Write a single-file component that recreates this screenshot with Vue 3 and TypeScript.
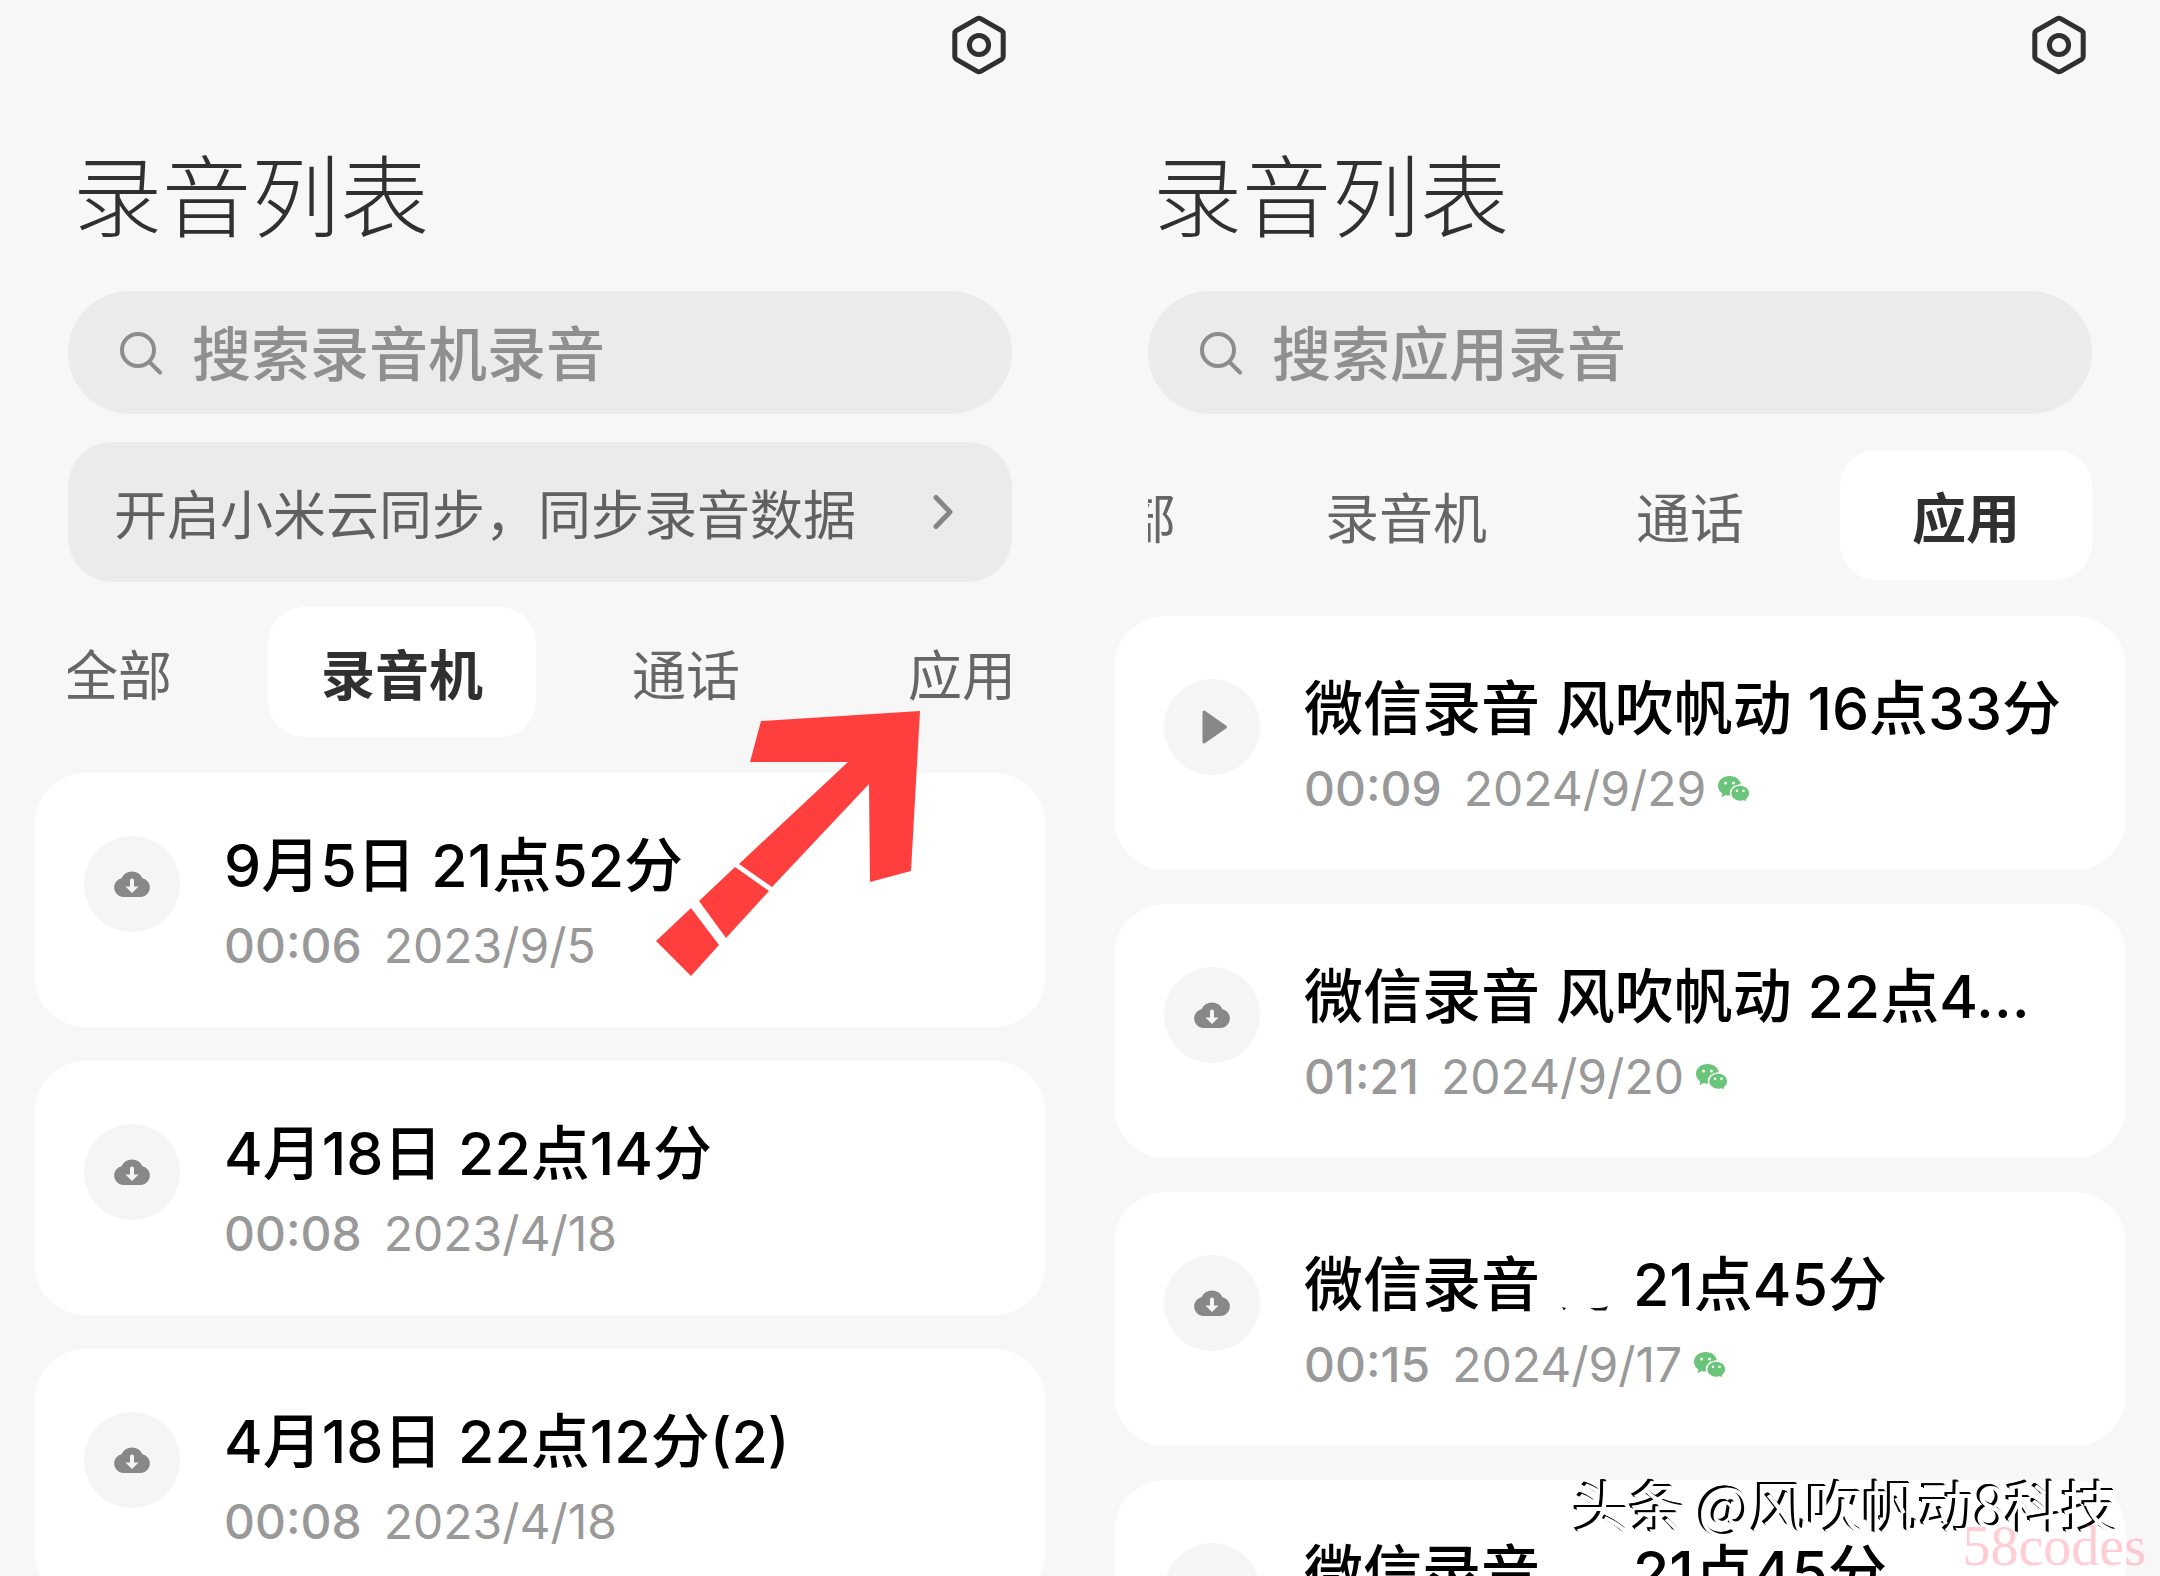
<script setup lang="ts">
interface Recording {
  title: string
  tail?: string
  duration: string
  date: string
  icon: 'cloud' | 'play'
  masked?: boolean
}

interface Pane {
  id: string
  placeholder: string
  sync: boolean
  wechat: boolean
  active: string
  recordings: Recording[]
}

const tabs: string[] = ['全部', '录音机', '通话', '应用']

const panes: Pane[] = [
  {
    id: 'recorder',
    placeholder: '搜索录音机录音',
    sync: true,
    wechat: false,
    active: '录音机',
    recordings: [
      { title: '9月5日 21点52分', duration: '00:06', date: '2023/9/5', icon: 'cloud' },
      { title: '4月18日 22点14分', duration: '00:08', date: '2023/4/18', icon: 'cloud' },
      { title: '4月18日 22点12分(2)', duration: '00:08', date: '2023/4/18', icon: 'cloud' },
    ],
  },
  {
    id: 'apps',
    placeholder: '搜索应用录音',
    sync: false,
    wechat: true,
    active: '应用',
    recordings: [
      { title: '微信录音 风吹帆动 16点33分', duration: '00:09', date: '2024/9/29', icon: 'play' },
      { title: '微信录音 风吹帆动 22点4…', duration: '01:21', date: '2024/9/20', icon: 'cloud' },
      { title: '微信录音', tail: '21点45分', duration: '00:15', date: '2024/9/17', icon: 'cloud', masked: true },
      { title: '微信录音', tail: '21点45分', duration: '00:15', date: '2024/9/17', icon: 'cloud', masked: true },
    ],
  },
]
</script>

<template>
  <main class="screens">
    <section v-for="pane in panes" :key="pane.id" class="pane">
      <div class="toolbar">
        <button class="settings" type="button" aria-label="设置">
          <svg width="56" height="60" viewBox="0 0 56 60" fill="none" stroke="#303030" stroke-width="5">
            <path d="M26.3 3.6Q28 2.7 29.7 3.6L50.6 15.6Q52.2 16.6 52.2 18.5V41.5Q52.2 43.4 50.6 44.4L29.7 56.4Q28 57.3 26.3 56.4L5.4 44.4Q3.8 43.4 3.8 41.5V18.5Q3.8 16.6 5.4 15.6Z" />
            <circle cx="28" cy="30" r="9.6" />
          </svg>
        </button>
      </div>

      <h1 class="heading">录音列表</h1>

      <label class="search">
        <svg width="44" height="44" viewBox="0 0 44 44" fill="none" stroke="#8c8c8c" stroke-width="4" stroke-linecap="round">
          <circle cx="18" cy="19" r="16" />
          <path d="M29.5 31L40 41.5" />
        </svg>
        <input type="text" :placeholder="pane.placeholder" :aria-label="pane.placeholder" />
      </label>

      <button v-if="pane.sync" class="sync" type="button">
        <span>开启小米云同步，同步录音数据</span>
        <svg width="22" height="36" viewBox="0 0 22 36" fill="none" stroke="#868686" stroke-width="5" stroke-linecap="round" stroke-linejoin="round">
          <path d="M4 3.500L18 18L4 32.500" />
        </svg>
      </button>

      <nav class="tabs" :class="{ 'tabs-middle': pane.sync }">
        <button
          v-for="tab in tabs"
          :key="tab"
          type="button"
          class="tab"
          :class="{ active: tab === pane.active }"
        >
          {{ tab }}
        </button>
      </nav>

      <ul class="list">
        <li v-for="(rec, i) in pane.recordings" :key="i" class="card">
          <button class="action" type="button" :aria-label="rec.icon === 'play' ? '播放' : '下载'">
            <svg v-if="rec.icon === 'play'" class="play" width="26" height="36" viewBox="0 0 26 36">
              <path d="M2 3L23.500 18L2 33Z" fill="#888" stroke="#888" stroke-width="3" stroke-linejoin="round" />
            </svg>
            <svg v-else width="38" height="28" viewBox="0 0 38 28">
              <path d="M9.500 27A9.500 9.500 0 0 1 8.500 8.300A11.500 11.500 0 0 1 29.500 8.300A9.500 9.500 0 0 1 28.500 27Z" fill="#888" />
              <path d="M17 10.500Q17 8.500 19 8.500T21 10.500V16.500H25.500L19 23L12.500 16.500H17Z" fill="#f5f5f5" />
            </svg>
          </button>
          <div class="info">
            <h2 class="title">
              <span>{{ rec.title }}</span>
              <svg v-if="rec.masked" class="mask" width="93" height="60" viewBox="0 0 93 60">
                <path d="M22 52l4 1-2 2.500zM50 53h9q5 0 9-2l-2 4.500h-11z" fill="#111" />
              </svg>
              <span v-if="rec.tail">{{ rec.tail }}</span>
            </h2>
            <p class="meta">
              <span class="duration">{{ rec.duration }}</span>
              <span class="date">{{ rec.date }}</span>
              <svg v-if="pane.wechat" class="wechat" width="32" height="28" viewBox="0 0 32 28">
                <path d="M11.500 1C5.200 1 0 5.200 0 10.800C0 14 1.700 16.800 4.300 18.600L3.600 22.300L7.700 19.900Q9.500 20.500 12 20.500C18 20.500 23 16.500 23 10.800S18 1 11.500 1Z" fill="#6ac47a" />
                <path d="M22.300 10C27.600 10 32 13.600 32 18.200C32 20.800 30.700 23 28.600 24.600L29.200 27.500L25.800 26Q24.200 26.500 22.300 26.500C16.800 26.500 12.500 22.800 12.500 18.200S16.800 10 22.300 10Z" fill="#6ac47a" stroke="#fff" stroke-width="1.500" />
                <circle cx="7.500" cy="8" r="1.500" fill="#fff" />
                <circle cx="15.500" cy="8" r="1.500" fill="#fff" />
                <circle cx="19" cy="15.800" r="1.300" fill="#fff" />
                <circle cx="25.500" cy="15.800" r="1.300" fill="#fff" />
              </svg>
            </p>
          </div>
        </li>
      </ul>

      <svg v-if="pane.sync" class="arrow" width="280" height="280" viewBox="650 705 280 280" fill="#ff3f3d">
        <path d="M761 721L920 711L911 871L870 882L869 784L772 887L739 864L848 762H750Z" />
        <path d="M735 867L769 891L726 938L699 901Z" />
        <path d="M691 908L719 945L691 976L656 941Z" />
      </svg>
    </section>

    <div class="credit">头条 @风吹帆动8科技</div>
    <div class="site">58codes</div>
  </main>
</template>

<style>
body {
  background: #f7f7f7;
}
</style>

<style scoped>
.screens {
  position: relative;
  display: flex;
  height: 100vh;
  overflow: hidden;
  background: #f7f7f7;
  font-family: Inter, "Noto Sans CJK SC", sans-serif;
}

.pane {
  position: relative;
  flex: 1;
  min-width: 0;
}

button {
  padding: 0;
  border: 0;
  background: none;
  font: inherit;
  color: inherit;
  cursor: pointer;
}

svg {
  display: block;
  flex: none;
}

.toolbar {
  display: flex;
  justify-content: flex-end;
  padding: 15px 73px 0;
}

.heading {
  margin: 73px 73px 43px;
  font-size: 89px;
  line-height: 100px;
  font-weight: 300;
  color: #303030;
}

.search {
  display: flex;
  align-items: center;
  gap: 28px;
  height: 123px;
  margin: 0 68px;
  padding: 0 52px;
  border-radius: 62px;
  background: #ebebeb;
}

.search input {
  flex: 1;
  min-width: 0;
  height: 90px;
  padding: 4px 0 0;
  box-sizing: border-box;
  border: 0;
  outline: 0;
  background: none;
  font-family: inherit;
  font-size: 59px;
  font-weight: 500;
  color: #303030;
}

.search input::placeholder {
  color: #8f8f8f;
  opacity: 1;
}

.sync {
  display: flex;
  align-items: center;
  justify-content: space-between;
  width: calc(100% - 136px);
  height: 140px;
  margin: 28px 68px 0;
  padding: 0 58px 0 46px;
  border-radius: 44px;
  background: #ebebeb;
  font-size: 53px;
  color: #606060;
}

.tabs {
  display: flex;
  justify-content: flex-end;
  gap: 24px;
  height: 130px;
  margin: 36px 68px 0;
  overflow: hidden;
}

.tabs-middle {
  justify-content: center;
  margin-top: 25px;
}

.tab {
  flex: none;
  min-width: 252px;
  padding: 0 53px;
  border-radius: 36px;
  font-size: 54px;
  color: #666;
}

.tab.active {
  background: #fff;
  font-weight: 700;
  color: #303030;
}

.list {
  display: flex;
  flex-direction: column;
  gap: 34px;
  margin: 36px 34px 0;
  padding: 0;
  list-style: none;
}

.card {
  display: flex;
  align-items: flex-start;
  gap: 44px;
  height: 254px;
  box-sizing: border-box;
  padding: 63px 50px 0;
  border-radius: 52px;
  background: #fff;
}

.action {
  display: flex;
  align-items: center;
  justify-content: center;
  flex: none;
  width: 96px;
  height: 96px;
  border-radius: 50%;
  background: #f5f5f5;
}

.play {
  margin-left: 6px;
}

.info {
  min-width: 0;
  white-space: nowrap;
}

.title {
  display: flex;
  margin: 0;
  font-size: 59px;
  line-height: 60px;
  font-weight: 500;
  color: #000;
}

.meta {
  display: flex;
  align-items: center;
  margin: 20px 0 0;
  font-size: 48px;
  line-height: 60px;
  color: #999;
}

.duration {
  margin-right: 22px;
  font-weight: 500;
}

.wechat {
  margin-left: 12px;
}

.arrow {
  position: absolute;
  top: 705px;
  right: 150px;
  pointer-events: none;
}

.credit {
  position: absolute;
  right: 42px;
  bottom: 36px;
  font-family: "Noto Sans CJK SC", sans-serif;
  font-size: 56px;
  line-height: 72px;
  color: #fff;
  text-shadow: -1px -1px 0 #000, -2px -2px 0 #000, -3px -2px 0 #000, 2px 2px 0 #fff;
}

.site {
  position: absolute;
  right: 14px;
  bottom: 0;
  font-family: "Liberation Serif", serif;
  font-size: 56px;
  line-height: 60px;
  color: rgba(255, 130, 145, 0.4);
}
</style>
